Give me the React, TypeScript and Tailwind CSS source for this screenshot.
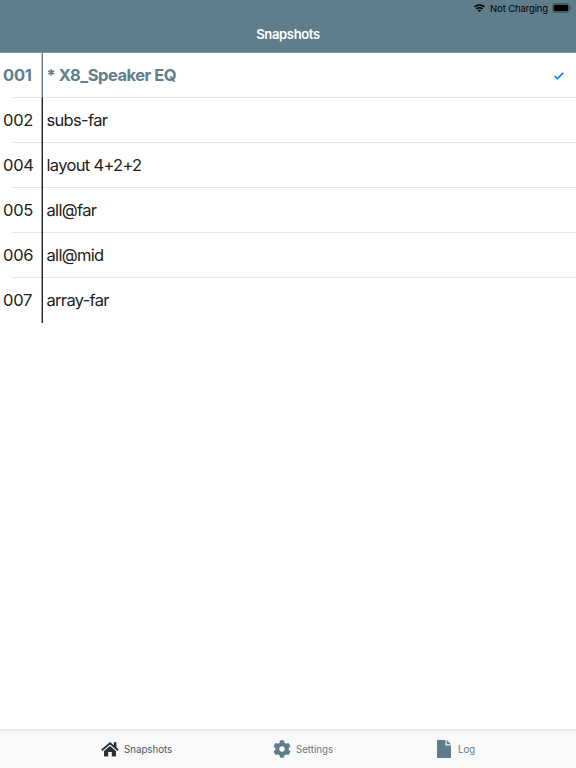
import { FaCog } from 'react-icons/fa';

const snapshots = [
  { id: '001', name: '* X8_Speaker EQ', active: true },
  { id: '002', name: 'subs-far' },
  { id: '004', name: 'layout 4+2+2' },
  { id: '005', name: 'all@far' },
  { id: '006', name: 'all@mid' },
  { id: '007', name: 'array-far' },
];

const StatusBar = () => (
  <div className="flex h-4 items-center justify-end pr-1 text-black">
    <svg className="mr-[5px] h-[8px] w-[11px]" viewBox="0 0 22 16" fill="none" stroke="currentColor" strokeWidth="3.2">
      <path d="M1.2 5.9c5.5-5.2 14.1-5.2 19.6 0" />
      <path d="M4.9 10c3.4-3.2 8.8-3.2 12.2 0" />
      <path d="M11 16l-3.4-3.3c2-1.7 4.8-1.7 6.8 0z" fill="currentColor" stroke="none" />
    </svg>
    <span className="mr-1 pt-px text-[9.5px] leading-[15px] tracking-[-0.13px]">Not Charging</span>
    <svg className="h-[10px] w-5" viewBox="0 0 20 10">
      <rect x="0.5" y="0.5" width="17" height="9" rx="2.4" fill="none" stroke="#000" strokeOpacity="0.3" />
      <rect x="1.7" y="1.7" width="14.6" height="6.6" rx="1" />
      <path d="M18.5 3.4v3.2c.9-.4 1.2-1 1.2-1.6s-.3-1.2-1.2-1.6z" fillOpacity="0.4" />
    </svg>
  </div>
);

const HomeIcon = () => (
  <svg className="h-[18px] w-[18px] text-[#263238]" viewBox="0 0 18 18" fill="currentColor">
    <path d="M.8 10.2L9 3.2l8.2 7" fill="none" stroke="currentColor" strokeWidth="1.8" />
    <path d="M12.8 2.3h2.6v6l-2.6-2.2z" />
    <path d="M9 5.9l6 5.1v4.7a.8.8 0 0 1-.8.8h-3.4v-4.6H7.2v4.6H3.8a.8.8 0 0 1-.8-.8V11z" />
  </svg>
);

const FileIcon = () => (
  <svg className="h-[18px] w-[18px]" viewBox="0 0 18 18" fill="currentColor">
    <path d="M2.7 0H10.5v4.6c0 .6.4 1 1 1H16v11.7a.7.7 0 0 1-.7.7H2.7a.7.7 0 0 1-.7-.7V.7a.7.7 0 0 1 .7-.7z" />
    <path d="M11.7 0L16 4.3h-4.3z" />
  </svg>
);

type SnapshotRowProps = {
  id: string;
  name: string;
  active?: boolean;
  first: boolean;
};

const SnapshotRow = ({ id, name, active, first }: SnapshotRowProps) => (
  <li className={`relative flex h-[45px] items-center text-[16.5px] ${active ? 'font-bold text-[#607d8b]' : 'text-[#212121]'}`}>
    {!first && <div className="absolute -top-px right-0 left-3 h-px bg-black/10" />}
    <span className="w-[41px] shrink-0 pl-[3px] tracking-[-0.25px]">{id}</span>
    <div
      className={`h-full w-[2px] shrink-0 border-l ${active ? 'border-[#bccad0] bg-[#607d8b]' : 'border-[#a6a6a6] bg-[#212121]'}`}
    />
    <span className={`flex-1 pl-[3.5px] whitespace-nowrap ${active ? 'tracking-[-0.48px]' : 'tracking-[-0.68px]'}`}>
      {name}
    </span>
    {active && (
      <svg className="mr-3 h-[8px] w-[10px]" viewBox="0 0 10 8" fill="none" stroke="#147efb" strokeWidth="1.7">
        <path d="M.7 4.1l2.7 2.5L9.3.8" />
      </svg>
    )}
  </li>
);

const App = () => {
  return (
    <div className="flex h-screen flex-col overflow-hidden bg-white font-['Inter','Liberation_Sans',sans-serif]">
      <header className="h-[53px] shrink-0 border-b border-[#8098a3] bg-[#607d8b]">
        <StatusBar />
        <h1 className="text-center text-[13px] leading-9 font-semibold tracking-[-0.35px] text-white">Snapshots</h1>
      </header>

      <ul className="flex-1">
        {snapshots.map((snapshot, index) => (
          <SnapshotRow key={snapshot.id} {...snapshot} first={index === 0} />
        ))}
      </ul>

      <nav className="flex h-[39px] shrink-0 items-center border-t-2 border-[#ebebeb] bg-[#f9f9f9] pb-px pl-[101px] text-[9.7px] text-[#607d8b]">
        <div className="flex w-[172px] items-center gap-[5px] text-[#455a64]">
          <HomeIcon />
          <span className="pt-[3px]">Snapshots</span>
        </div>
        <div className="flex w-[162px] items-center gap-[5px]">
          <FaCog className="h-[18px] w-[18px]" />
          <span className="pt-[3px]">Settings</span>
        </div>
        <div className="flex items-center gap-[5px]">
          <FileIcon />
          <span className="pt-[3px]">Log</span>
        </div>
      </nav>
    </div>
  );
};

export default App;
